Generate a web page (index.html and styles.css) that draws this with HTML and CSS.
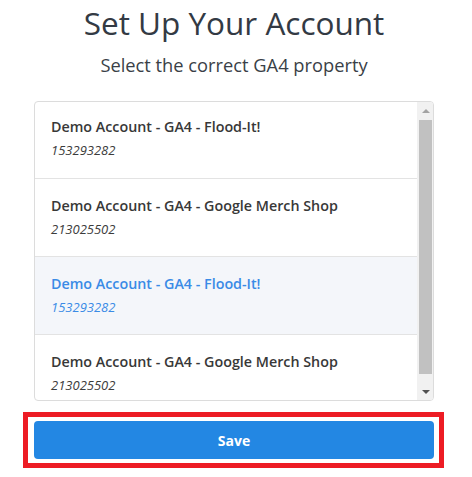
FILE: index.html
```html
<!DOCTYPE html>
<html>
<head>
<meta charset="utf-8">
<link rel="stylesheet" href="styles.css">
</head>
<body>
<div class="page">
  <h1 class="title">Set Up Your Account</h1>
  <p class="subtitle">Select the correct GA4 property</p>
  <div class="list">
    <div class="items">
      <div class="item first">
        <div class="name">Demo Account - GA4 - Flood-It!</div>
        <div class="id">153293282</div>
      </div>
      <div class="item">
        <div class="name">Demo Account - GA4 - Google Merch Shop</div>
        <div class="id">213025502</div>
      </div>
      <div class="item selected">
        <div class="name">Demo Account - GA4 - Flood-It!</div>
        <div class="id">153293282</div>
      </div>
      <div class="item">
        <div class="name">Demo Account - GA4 - Google Merch Shop</div>
        <div class="id">213025502</div>
      </div>
    </div>
    <div class="scrollbar">
      <div class="sb-btn"><span class="arrow-up"></span></div>
      <div class="sb-track"><div class="sb-thumb"></div></div>
      <div class="sb-btn"><span class="arrow-down"></span></div>
    </div>
  </div>
  <div class="highlight">
    <button class="save">Save</button>
  </div>
</div>
</body>
</html>
```

FILE: styles.css
```css
html, body {
  margin: 0;
  padding: 0;
  background: #fff;
}
body {
  font-family: "Open Sans", "Noto Sans", sans-serif;
  color: #343a40;
}
.page {
  width: 400px;
  margin-left: 34px;
}
.title {
  margin: 0;
  padding-top: 3px;
  font-size: 31.5px;
  line-height: 40px;
  font-weight: 400;
  text-align: center;
  color: #333a44;
}
.subtitle {
  margin: 9px 0 0;
  font-size: 18.3px;
  line-height: 26px;
  text-align: center;
  color: #3a3f47;
}
.list {
  display: flex;
  margin-top: 23px;
  height: 300px;
  box-sizing: border-box;
  border: 1px solid #dcdcdc;
  border-radius: 4px;
  overflow: hidden;
}
.items {
  flex: 1;
  min-width: 0;
  overflow: hidden;
}
.scrollbar {
  width: 16px;
  flex: none;
  display: flex;
  flex-direction: column;
  background: #f1f1f1;
}
.sb-btn {
  height: 17px;
  flex: none;
  display: flex;
  align-items: center;
  justify-content: center;
}
.arrow-up {
  width: 0;
  height: 0;
  border-left: 4px solid transparent;
  border-right: 4px solid transparent;
  border-bottom: 4px solid #a3a3a3;
  margin-left: 1px;
}
.arrow-down {
  width: 0;
  height: 0;
  border-left: 4px solid transparent;
  border-right: 4px solid transparent;
  border-top: 4px solid #505050;
  margin-left: 1px;
}
.sb-track {
  flex: 1;
  padding: 1px 1px 0 2px;
}
.sb-thumb {
  height: 254px;
  background: #c1c1c1;
}
.item {
  box-sizing: border-box;
  height: 78px;
  padding: 17px 16px 0;
  border-bottom: 1px solid #e3e3e3;
}
.item.first {
  height: 77px;
  padding-top: 15px;
}
.item:last-child {
  border-bottom: none;
}
.name {
  font-size: 14.3px;
  line-height: 20px;
  font-weight: 600;
  color: #383838;
  white-space: nowrap;
}
.id {
  margin-top: 4px;
  font-size: 13px;
  line-height: 18px;
  font-style: italic;
  color: #3c3c3c;
}
.selected {
  background: #f4f6fa;
}
.selected .name,
.selected .id {
  color: #3a8be6;
}
.highlight {
  margin-top: 11px;
  margin-left: -11px;
  width: 421px;
  box-sizing: border-box;
  border: 5px solid #ed1c24;
  padding: 4px 5px 4px 6px;
}
.save {
  display: flex;
  align-items: center;
  justify-content: center;
  width: 400px;
  height: 38px;
  border: none;
  border-radius: 4px;
  background: #2387e3;
  color: #fff;
  font-family: "Open Sans", "Noto Sans", sans-serif;
  font-size: 14px;
  font-weight: 700;
  padding: 0;
}
```
